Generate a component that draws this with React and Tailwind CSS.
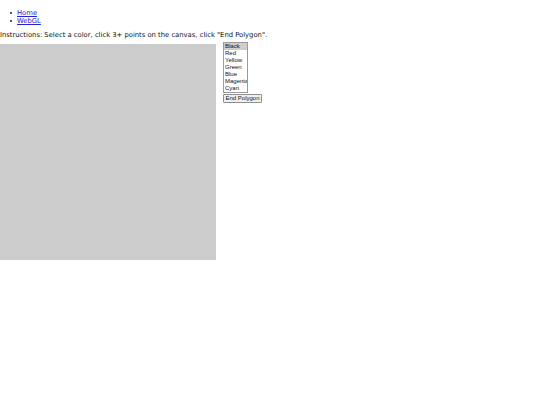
export default function App() {
  const colors = ["Black", "Red", "Yellow", "Green", "Blue", "Magenta", "Cyan"];
  const links = ["Home", "WebGL"];
  return (
    <div className="w-[540px] h-[405px] bg-white text-[#111]" style={{ fontFamily: '"DejaVu Sans", Verdana, sans-serif' }}>
      <ul className="pl-[10px] pt-[9px] text-[6.8px] leading-[8px]">
        {links.map((l) => (
          <li key={l} className="flex items-center">
            <span className="w-[2px] h-[2px] rounded-full bg-[#222] mr-[5px]"></span>
            <a href="#" className="text-[#2222dd] underline">{l}</a>
          </li>
        ))}
      </ul>
      <p className="mt-[6px] text-[6.8px] leading-[8px] whitespace-nowrap">
        Instructions: Select a color, click 3+ points on the canvas, click "End Polygon".
      </p>
      <div className="flex items-start gap-[7px] mt-[3px]">
        <div className="w-[216px] h-[216px] bg-[#cccccc] mt-[2px]"></div>
        <div className="flex flex-col items-start gap-[1px]">
          <div className="w-[25px] h-[51px] border border-[#9a9a9a] bg-white flex flex-col" style={{ fontFamily: '"Liberation Sans", Arial, sans-serif' }}>
            {colors.map((c, i) => (
              <div key={c} className={`h-[7px] text-[6px] leading-[7px] pl-[1px] whitespace-nowrap overflow-hidden ${i === 0 ? "bg-[#cecece]" : ""}`}>{c}</div>
            ))}
          </div>
          <button className="h-[9px] w-[39px] text-[6px] leading-[7px] border border-[#8f8f8f] rounded-[1px] bg-[#efefef] whitespace-nowrap" style={{ fontFamily: '"Liberation Sans", Arial, sans-serif' }}>End Polygon</button>
        </div>
      </div>
    </div>
  );
}
